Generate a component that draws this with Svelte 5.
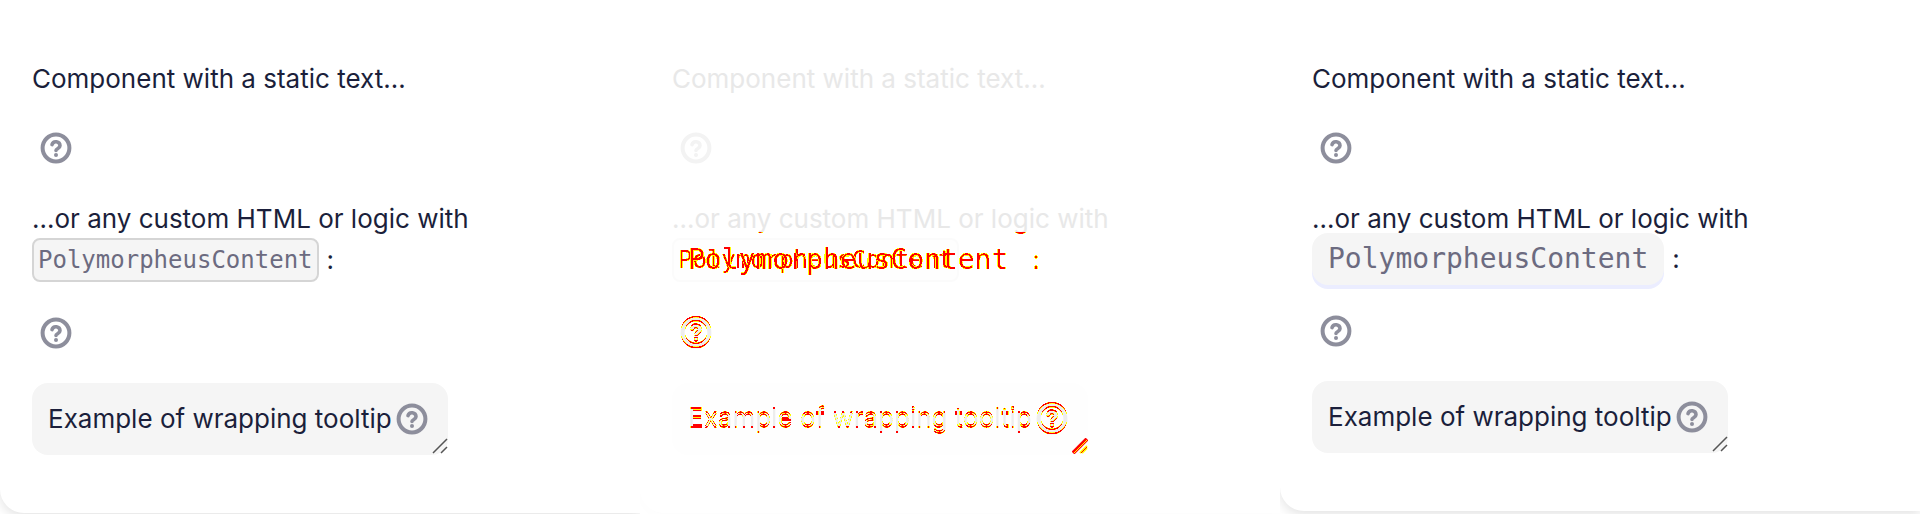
<script>
  const heading = 'Component with a static text…';
  const custom = '…or any custom HTML or logic with';
  const token = 'PolymorpheusContent';
  const wrapping = 'Example of wrapping tooltip';
</script>

{#snippet icon()}
  <svg class="icon" viewBox="0 0 32 32" aria-hidden="true">
    <g fill="none" stroke="currentColor" stroke-width="4" stroke-linecap="round" stroke-linejoin="round">
      <circle cx="16" cy="16" r="13.4" />
      <path d="M12 12.6a4.1 4.1 0 0 1 8 1.2c0 2.7-4 3-4 4.6" stroke-width="3.6" />
      <path d="M16 23h.01" />
    </g>
  </svg>
{/snippet}

{#snippet grip(kind)}
  <svg class="grip" viewBox="0 0 16 16" aria-hidden="true">
    {#if kind === 'delta'}
      <path d="M1 15 15 1" fill="none" stroke="#f00" stroke-width="4" />
      <path d="M2 15 15 2" fill="none" stroke="#ff0" stroke-width="1" />
      <path d="M8 15l7-7M10 15l5-5" fill="none" stroke="#ff0" stroke-width="2" />
      <path d="M9 15l6-6" fill="none" stroke="#f00" stroke-width="1" />
    {:else}
      <path d="M1 15 15 1M9 15l6-6" fill="none" stroke="#555" stroke-width="1.5" />
    {/if}
  </svg>
{/snippet}

<svg class="defs" aria-hidden="true">
  <filter id="ink" x="-5%" y="-20%" width="110%" height="140%" color-interpolation-filters="sRGB">
    <feComponentTransfer in="SourceAlpha" result="soft">
      <feFuncA type="linear" slope="20" intercept="-2" />
    </feComponentTransfer>
    <feComponentTransfer in="SourceAlpha" result="hard">
      <feFuncA type="linear" slope="20" intercept="-14" />
    </feComponentTransfer>
    <feFlood flood-color="#ff0" />
    <feComposite in2="soft" operator="in" result="yellow" />
    <feFlood flood-color="#f00" />
    <feComposite in2="hard" operator="in" result="red" />
    <feMerge>
      <feMergeNode in="yellow" />
      <feMergeNode in="red" />
    </feMerge>
  </filter>
  <filter id="shift" x="-5%" y="-20%" width="110%" height="140%" color-interpolation-filters="sRGB">
    <feOffset in="SourceAlpha" dy="-2" result="moved" />
    <feComposite in="SourceAlpha" in2="moved" operator="xor" result="delta" />
    <feComponentTransfer in="delta" result="soft">
      <feFuncA type="linear" slope="20" intercept="-10" />
    </feComponentTransfer>
    <feComponentTransfer in="delta" result="hard">
      <feFuncA type="linear" slope="20" intercept="-16" />
    </feComponentTransfer>
    <feFlood flood-color="#ededed" />
    <feComposite in2="SourceAlpha" operator="in" result="ghost" />
    <feFlood flood-color="#ff0" />
    <feComposite in2="soft" operator="in" result="yellow" />
    <feFlood flood-color="#f00" />
    <feComposite in2="hard" operator="in" result="red" />
    <feMerge>
      <feMergeNode in="ghost" />
      <feMergeNode in="yellow" />
      <feMergeNode in="red" />
    </feMerge>
  </filter>
</svg>

<main>
  {#each ['before', 'delta', 'after'] as kind}
    <div class="pane {kind}">
      <section class="card">
        <p class="line">{heading}</p>
        <button class="hint" aria-label="Show hint">{@render icon()}</button>
        <p class="line custom">
          {custom}
          {#if kind === 'delta'}<span class="over tails" aria-hidden="true">{custom}</span>{/if}
        </p>
        <div class="code-row">
          <code><span>{token}</span></code>
          <span>:</span>
          {#if kind === 'delta'}
            <div class="over moved" aria-hidden="true"><span class="big">{token}</span><span>:</span></div>
          {/if}
        </div>
        <button class="hint second" aria-label="Show custom hint">{@render icon()}</button>
        <div class="wrap">
          <span class="label">{wrapping}</span>
          {@render icon()}
          {@render grip(kind)}
        </div>
      </section>
    </div>
  {/each}
</main>

<style>
  :global(body) {
    margin: 0;
    background: #fff;
  }
  .defs {
    position: absolute;
    width: 0;
    height: 0;
  }
  main {
    display: grid;
    grid-template-columns: repeat(3, 1fr);
    overflow: hidden;
    color: #1b1f3b;
    font: 26px/40px Inter, sans-serif;
  }
  .pane {
    min-width: 0;
    overflow: hidden;
  }
  .card {
    padding: 59px 32px 58px;
    margin-bottom: 2px;
    border-radius: 0 0 0 24px;
    background: #fff;
    box-shadow: 0 4px 12px rgba(0, 0, 0, 0.11);
  }
  .line {
    position: relative;
    margin: 0;
    white-space: nowrap;
  }
  .hint {
    display: block;
    margin: 33px 8px 35px;
    padding: 0;
    border: 0;
    background: none;
  }
  .icon {
    display: block;
    flex: none;
    width: 32px;
    height: 32px;
    color: #8d8e9c;
  }
  .code-row {
    position: relative;
    display: flex;
    align-items: center;
    gap: 8px;
    height: 42px;
  }
  code {
    padding: 0 4px;
    border: 2px solid #d5d5d5;
    border-radius: 8px;
    background: #f5f5f5;
    color: #6c6b80;
    font: 24px/40px "DejaVu Sans Mono", monospace;
  }
  .hint.second {
    margin: 36px 8px 34px;
  }
  .wrap {
    position: relative;
    display: flex;
    align-items: center;
    gap: 4px;
    width: fit-content;
    height: 72px;
    padding: 0 20px 0 16px;
    border-radius: 16px;
    background: #f5f5f5;
    white-space: nowrap;
  }
  .grip {
    position: absolute;
    right: 0;
    bottom: 1px;
    width: 16px;
    height: 16px;
  }
  .after .card {
    margin-bottom: 4px;
  }
  .after .code-row {
    height: 40px;
  }
  .after code {
    padding: 0 16px;
    border: 0;
    border-radius: 16px;
    box-shadow: 0 4px #ebedff;
    font-size: 28px;
    line-height: 52px;
  }
  .delta {
    color: #e8e8e8;
  }
  .delta .card {
    box-shadow: 0 4px 12px rgba(0, 0, 0, 0.01);
  }
  .delta .icon {
    color: #f3f3f3;
  }
  .delta code {
    border-color: #fbfbfb;
    background: #fefefe;
  }
  .delta code span,
  .moved,
  .tails {
    color: #000;
    filter: url(#ink);
  }
  .over {
    position: absolute;
    inset: 0;
  }
  .tails {
    clip-path: inset(33px 0 0);
  }
  .moved {
    display: flex;
    align-items: center;
    gap: 24px;
    padding-left: 16px;
  }
  .big {
    font: 28px/40px "DejaVu Sans Mono", monospace;
  }
  .delta .wrap {
    background: #fefefe;
  }
  .delta .second .icon,
  .delta .wrap .icon,
  .delta .label {
    color: #000;
    filter: url(#shift);
  }
</style>
